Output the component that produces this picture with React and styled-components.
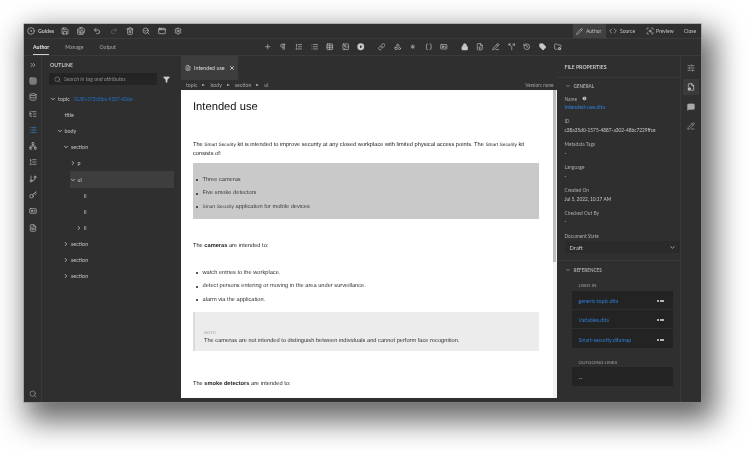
import React from "react";
import styled, { createGlobalStyle } from "styled-components";
import {
  AppWindow, Asterisk, Braces, ChevronDown, ChevronRight, ChevronsRight, CircleDot, Code, Database,
  FileCog, FileDown, FileText, FolderCog, Funnel, GitBranch, Grid3x3, History, IdCard, Image, Info,
  Key, Link, List, ListOrdered, ListTree, Lock, MessageSquare, Network, Pencil, PencilLine, Pilcrow, Plus,
  Redo2, Save, SaveAll, ScanSearch, Search, SearchCheck, Settings, Shapes, SlidersHorizontal, Split, Table,
  Tag, Trash2, Undo2, X,
} from "lucide-react";

const GlobalStyle = createGlobalStyle`
  html, body {
    margin: 0;
    padding: 0;
    background: #fff;
    overflow: hidden;
  }
`;

const Page = styled.div`
  width: 750px;
  height: 450px;
  padding: 24px 0 0 24px;
  box-sizing: border-box;
  overflow: hidden;
  font-family: Lato, "Open Sans", sans-serif;
`;

const Window = styled.div`
  width: 677px;
  height: 378px;
  display: flex;
  flex-direction: column;
  background: #2f2f2f;
  color: #c4c4c4;
  font-size: 5.4px;
  filter: blur(0.25px);
  box-shadow: 0 0 0 0.5px #888, 8px 13px 28px 6px rgba(0, 0, 0, 0.6);
`;

const TopBar = styled.div`
  height: 14px;
  flex: none;
  display: flex;
  align-items: center;
  justify-content: space-between;
  padding-left: 2px;
  border-bottom: 1px solid #3a3a3a;
`;

const IconGroup = styled.div`
  display: flex;
  align-items: center;
`;

const IconCell = styled.span`
  width: ${(p) => p.$w || 16.2}px;
  height: 12px;
  flex: none;
  display: flex;
  align-items: center;
  justify-content: center;
  color: ${(p) => (p.$dim ? "#6a6a6a" : "#c8c8c8")};
`;

const GuidesLabel = styled.span`
  width: 19px;
  margin-left: 2px;
  font-size: 5.2px;
  font-weight: 700;
`;

const ModeTabs = styled.div`
  display: flex;
  align-items: stretch;
  height: 100%;
  font-size: 5px;
`;

const ModeTab = styled.div`
  width: ${(p) => p.$w}px;
  box-sizing: border-box;
  display: flex;
  align-items: center;
  gap: ${(p) => p.$gap || 3}px;
  padding-left: 3px;
  background: ${(p) => (p.$active ? "#414141" : "transparent")};
`;

const Toolbar = styled.div`
  height: 16px;
  flex: none;
  display: flex;
  align-items: center;
  justify-content: space-between;
  padding: 0 135px 0 9px;
  border-bottom: 1px solid #3a3a3a;
`;

const SubTabs = styled.div`
  display: flex;
  gap: 16px;
  height: 100%;
  font-size: 5.2px;
`;

const SubTab = styled.div`
  display: flex;
  align-items: center;
  height: 100%;
  box-sizing: border-box;
  color: ${(p) => (p.$active ? "#e4e4e4" : "#a8a8a8")};
  font-weight: ${(p) => (p.$active ? 700 : 400)};
  border-bottom: 1px solid ${(p) => (p.$active ? "#d0d0d0" : "transparent")};
`;

const Main = styled.div`
  flex: 1;
  min-height: 0;
  display: grid;
  grid-template-columns: 18px 138.5px 376px 124.5px 20px;
`;

const Rail = styled.div`
  display: flex;
  flex-direction: column;
  align-items: center;
  border-right: 1px solid #393939;
  padding-top: 0.5px;
`;

const RailButton = styled.div`
  width: 18px;
  height: 16.3px;
  flex: none;
  display: flex;
  align-items: center;
  justify-content: center;
  color: ${(p) => (p.$active ? "#3d8ce0" : "#bdbdbd")};
`;

const RailFoot = styled.div`
  margin-top: auto;
  height: 16px;
  display: flex;
  align-items: center;
  color: #9a9a9a;
`;

const Outline = styled.div`
  display: flex;
  flex-direction: column;
`;

const PanelTitle = styled.div`
  height: 17px;
  flex: none;
  display: flex;
  align-items: center;
  padding-left: 8px;
  font-size: 5.2px;
  font-weight: 700;
  letter-spacing: 0.1px;
  color: #c8c8c8;
`;

const SearchRow = styled.div`
  display: flex;
  align-items: center;
  gap: 6px;
  margin: 0 0 6px 7px;
`;

const SearchBox = styled.div`
  width: 108px;
  height: 12px;
  display: flex;
  align-items: center;
  gap: 3px;
  padding-left: 5px;
  box-sizing: border-box;
  background: #242424;
  border-radius: 1px;
  font-size: 5.4px;
  font-style: italic;
  color: #8c8c8c;
`;

const FilterIcon = styled.span`
  display: flex;
  color: #cfcfcf;
`;

const TreeRow = styled.div`
  height: 16.1px;
  flex: none;
  display: flex;
  align-items: center;
  gap: 2px;
  margin-left: ${(p) => 8 + p.$depth * 6.5}px;
  margin-right: 7px;
  background: ${(p) => (p.$selected ? "#3e3e3e" : "transparent")};
  font-size: 5.4px;
`;

const Twist = styled.span`
  width: 6px;
  flex: none;
  display: flex;
  justify-content: center;
  color: #d8d8d8;
`;

const GuidLink = styled.span`
  margin-left: 2px;
  font-size: 4.7px;
  color: #2272c8;
  white-space: nowrap;
`;

const Editor = styled.div`
  display: flex;
  flex-direction: column;
  min-height: 0;
  margin-left: 0.5px;
`;

const FileTabs = styled.div`
  height: 24px;
  flex: none;
  display: flex;
`;

const FileTab = styled.div`
  width: 57px;
  display: flex;
  align-items: center;
  padding-left: 4px;
  box-sizing: border-box;
  gap: 3px;
  background: #3d3d3d;
  font-size: 5.4px;
  white-space: nowrap;
  color: #dcdcdc;
`;

const FileTabClose = styled.span`
  margin-left: auto;
  margin-right: 3px;
  display: flex;
  color: #e8e8e8;
`;

const Breadcrumbs = styled.div`
  height: 10px;
  flex: none;
  display: flex;
  align-items: center;
  gap: 5px;
  padding: 0 3px 0 5px;
  font-size: 5.2px;
  color: #a4a4a4;
`;

const Caret = styled.span`
  width: 0;
  height: 0;
  border-left: 3px solid #c0c0c0;
  border-top: 1.5px solid transparent;
  border-bottom: 1.5px solid transparent;
`;

const Version = styled.span`
  margin-left: auto;
  font-size: 4.7px;
`;

const DocFrame = styled.div`
  flex: 1;
  min-height: 0;
  display: flex;
  margin-bottom: 4px;
  background: #fff;
  overflow: hidden;
`;

const Doc = styled.div`
  flex: 1;
  min-width: 0;
  padding: 0 14px 0 12px;
  color: #222;
  font-family: "Liberation Sans", Arial, sans-serif;
  font-size: 5.68px;
  line-height: 9px;
  text-rendering: geometricPrecision;
`;

const Heading = styled.h1`
  margin: 10px 0 25.5px;
  height: 15px;
  font-size: 11.2px;
  line-height: 15px;
  font-weight: 400;
  color: #111;
`;

const Para = styled.p`
  margin: ${(p) => p.$top || 0}px 0 0;
`;

const Brand = styled.span`
  font-size: 4.8px;
`;

const Bullets = styled.ul`
  list-style: none;
  margin: ${(p) => p.$top || 0}px 0 0;
  padding: ${(p) => (p.$shaded ? "10.25px 3px 5.25px" : "0 3px")};
  background: ${(p) => (p.$shaded ? "#c9c9c9" : "transparent")};
  color: ${(p) => (p.$shaded ? "#3c3c3c" : "#333")};
`;

const Bullet = styled.li`
  height: 13.5px;
  display: flex;
  align-items: center;
  gap: 4.5px;
  white-space: pre;

  &::before {
    content: "";
    width: 2px;
    height: 2px;
    flex: none;
    border-radius: 50%;
    background: #222;
  }
`;

const Note = styled.div`
  margin-top: 5.25px;
  height: 39px;
  box-sizing: border-box;
  padding: 17.5px 0 0 9px;
  background: #ececec;
  border-left: 2px solid #dadada;
  color: #333;
`;

const NoteLabel = styled.div`
  font-size: 4px;
  line-height: 5px;
  margin-bottom: 2px;
  letter-spacing: 0.3px;
  color: #999;
`;

const Scrollbar = styled.div`
  width: 4px;
  flex: none;
  background: #f2f2f2;
`;

const ScrollThumb = styled.div`
  width: 3px;
  margin-left: 0.5px;
  height: 172px;
  background: #bdbdbd;
`;

const Properties = styled.div`
  display: flex;
  flex-direction: column;
  border-right: 1px solid #393939;
`;

const PropHeader = styled.div`
  height: 21px;
  flex: none;
  display: flex;
  align-items: center;
  padding-left: 8px;
  font-size: 5.2px;
  font-weight: 700;
  color: #c8c8c8;
  border-bottom: 1px solid #393939;
`;

const SectionHead = styled.div`
  height: ${(p) => p.$h}px;
  flex: none;
  display: flex;
  align-items: center;
  gap: 3px;
  padding-left: 8px;
  font-size: 4.6px;
  font-weight: 700;
  color: #a8a8a8;
`;

const Fields = styled.div`
  padding: 0 0 0 8px;
`;

const Field = styled.div`
  height: 22.9px;
`;

const FieldLabel = styled.div`
  display: flex;
  align-items: center;
  gap: 5px;
  height: 9px;
  font-size: 4.8px;
  color: #acacac;
`;

const FieldValue = styled.div`
  height: 9px;
  line-height: 9px;
  font-size: ${(p) => (p.$link ? 5.3 : 4.8)}px;
  white-space: nowrap;
  color: ${(p) => (p.$link ? "#2f7fd6" : "#c8c8c8")};
`;

const StateSelect = styled.div`
  height: 12px;
  margin: 1px 0 7px;
  display: flex;
  align-items: center;
  justify-content: space-between;
  padding: 0 4px 0 5px;
  background: #2a2a2a;
  font-size: 5.8px;
  color: #c8c8c8;
`;

const SectionRule = styled.div`
  height: 1px;
  flex: none;
  background: #393939;
`;

const SubHead = styled.div`
  height: ${(p) => p.$h}px;
  box-sizing: border-box;
  padding: ${(p) => p.$top || 0}px 0 0 22px;
  display: flex;
  align-items: center;
  font-size: 4.6px;
  color: #a0a0a0;
`;

const RefList = styled.div`
  margin: 0 7px 0 15px;
  background: #232323;
`;

const RefRow = styled.div`
  height: 19px;
  box-sizing: border-box;
  display: flex;
  align-items: center;
  justify-content: space-between;
  padding: 2px 9px 0 7px;
  font-size: 5.2px;
  color: #2f7fd6;
  border-bottom: ${(p) => (p.$last ? "none" : "1px solid #2e2e2e")};
`;

const Dots = styled.span`
  display: flex;
  gap: 0.5px;

  i {
    width: 2px;
    height: 2px;
    background: #e4e4e4;
    border-radius: 50%;
  }
`;

const EmptyRow = styled.div`
  height: 19px;
  display: flex;
  align-items: center;
  margin: 0 7px 0 15px;
  padding: 3px 0 0 7px;
  box-sizing: border-box;
  background: #232323;
  font-size: 5.4px;
`;

const SideRail = styled.div`
  display: flex;
  flex-direction: column;
  align-items: center;
  padding-top: 4px;
`;

const SideButton = styled.div`
  width: 16px;
  height: 16px;
  margin-bottom: 3.4px;
  display: flex;
  align-items: center;
  justify-content: center;
  background: ${(p) => (p.$active ? "#3a3a3a" : "transparent")};
  color: ${(p) => (p.$active ? "#dcdcdc" : "#a8a8a8")};
`;

const PlayDisc = ({ size }) => (
  <svg width={size} height={size} viewBox="0 0 24 24">
    <circle cx="12" cy="12" r="11" fill="currentColor" />
    <path d="M9.5 7l8 5-8 5z" fill="#2f2f2f" />
  </svg>
);

const FilledLock = ({ size }) => <Lock size={size} fill="currentColor" />;
const FilledTag = ({ size }) => <Tag size={size} fill="currentColor" />;

const fileIcons = [Save, SaveAll, Undo2, Redo2, Trash2, SearchCheck, AppWindow, Settings];
const toolIcons = [
  Plus, Pilcrow, ListOrdered, List, Table, Image, PlayDisc, null, Link, Shapes, Asterisk, Braces, IdCard,
  null, FilledLock, FileDown, PencilLine, Split, History, FilledTag, FolderCog,
];
const railIcons = [ChevronsRight, Grid3x3, Database, ListTree, List, Network, ListOrdered, GitBranch, Key, IdCard, FileText];

const tree = [
  { depth: 0, label: "topic", open: true, guid: "GUID-373cf0bc-9337-436e-" },
  { depth: 1, label: "title" },
  { depth: 1, label: "body", open: true },
  { depth: 2, label: "section", open: true },
  { depth: 3, label: "p", open: false },
  { depth: 3, label: "ul", open: true, selected: true },
  { depth: 4, label: "li" },
  { depth: 4, label: "li" },
  { depth: 4, label: "li", open: false },
  { depth: 2, label: "section", open: false },
  { depth: 2, label: "section", open: false },
  { depth: 2, label: "section", open: false },
];

const fields = [
  { label: "ID", value: "c38a35d0-1575-4887-a302-48bc7229ffce" },
  { label: "Metadata Tags", value: "-" },
  { label: "Language", value: "-" },
  { label: "Created On", value: "Jul 5, 2022, 10:17 AM" },
  { label: "Checked Out By", value: "-" },
];

const SmartSecurity = () => <Brand>Smart Security</Brand>;

const App = () => (
  <Page>
    <GlobalStyle />
    <Window>
      <TopBar>
        <IconGroup>
          <IconCell $w={10}>
            <CircleDot size={8} />
          </IconCell>
          <GuidesLabel>Guides</GuidesLabel>
          {fileIcons.map((Icon, i) => (
            <IconCell key={i} $dim={i === 3}>
              <Icon size={8} />
            </IconCell>
          ))}
        </IconGroup>
        <ModeTabs>
          <ModeTab $active $w={33}>
            <Pencil size={7} />
            Author
          </ModeTab>
          <ModeTab $w={37}>
            <Code size={8} />
            Source
          </ModeTab>
          <ModeTab $w={38} $gap={2}>
            <ScanSearch size={8} />
            Preview
          </ModeTab>
          <ModeTab $w={20}>Close</ModeTab>
        </ModeTabs>
      </TopBar>

      <Toolbar>
        <SubTabs>
          <SubTab $active>Author</SubTab>
          <SubTab>Manage</SubTab>
          <SubTab>Output</SubTab>
        </SubTabs>
        <IconGroup>
          {toolIcons.map((Icon, i) =>
            Icon ? (
              <IconCell key={i} $w={15.6}>
                <Icon size={7.5} />
              </IconCell>
            ) : (
              <IconCell key={i} $w={5} />
            )
          )}
        </IconGroup>
      </Toolbar>

      <Main>
        <Rail>
          {railIcons.map((Icon, i) => (
            <RailButton key={i} $active={i === 4}>
              <Icon size={8} />
            </RailButton>
          ))}
          <RailFoot>
            <Search size={8} />
          </RailFoot>
        </Rail>

        <Outline>
          <PanelTitle>OUTLINE</PanelTitle>
          <SearchRow>
            <SearchBox>
              <Search size={7} />
              Search in tag and attributes
            </SearchBox>
            <FilterIcon>
              <Funnel size={7} fill="currentColor" />
            </FilterIcon>
          </SearchRow>
          {tree.map((node, i) => (
            <TreeRow key={i} $depth={node.depth} $selected={node.selected}>
              <Twist>
                {node.open === true && <ChevronDown size={6} strokeWidth={3} />}
                {node.open === false && <ChevronRight size={6} strokeWidth={3} />}
              </Twist>
              {node.label}
              {node.guid && <GuidLink>{node.guid}</GuidLink>}
            </TreeRow>
          ))}
        </Outline>

        <Editor>
          <FileTabs>
            <FileTab>
              <FileText size={6} />
              Intended use
              <FileTabClose>
                <X size={6} strokeWidth={3} />
              </FileTabClose>
            </FileTab>
          </FileTabs>
          <Breadcrumbs>
            topic <Caret /> body <Caret /> section <Caret /> ul
            <Version>Version: none</Version>
          </Breadcrumbs>
          <DocFrame>
            <Doc>
              <Heading>Intended use</Heading>
              <Para>
                The <SmartSecurity /> kit is intended to improve security at any closed workplace with limited physical
                access points. The <SmartSecurity /> kit consists of:
              </Para>
              <Bullets $shaded $top={4.5}>
                <Bullet>Three cameras</Bullet>
                <Bullet>Five smoke detectors</Bullet>
                <Bullet>
                  <span>
                    <SmartSecurity /> application for mobile devices
                  </span>
                </Bullet>
              </Bullets>
              <Para $top={22.5}>
                The <b>cameras</b> are intended to:
              </Para>
              <Bullets $top={15.75}>
                <Bullet>watch entries to the workplace.</Bullet>
                <Bullet>detect persons entering or moving in the area under surveillance.</Bullet>
                <Bullet>alarm via the application.</Bullet>
              </Bullets>
              <Note>
                <NoteLabel>NOTE</NoteLabel>
                The cameras are not intended to distinguish between individuals and cannot perform face recognition.
              </Note>
              <Para $top={28.5}>
                The <b>smoke detectors</b> are intended to:
              </Para>
            </Doc>
            <Scrollbar>
              <ScrollThumb />
            </Scrollbar>
          </DocFrame>
        </Editor>

        <Properties>
          <PropHeader>FILE PROPERTIES</PropHeader>
          <SectionHead $h={16}>
            <ChevronDown size={6} strokeWidth={2.5} />
            GENERAL
          </SectionHead>
          <Fields>
            <Field>
              <FieldLabel>
                Name
                <Info size={5} fill="#d0d0d0" color="#2f2f2f" />
              </FieldLabel>
              <FieldValue $link>intended-use.dita</FieldValue>
            </Field>
            {fields.map((f) => (
              <Field key={f.label}>
                <FieldLabel>{f.label}</FieldLabel>
                <FieldValue>{f.value}</FieldValue>
              </Field>
            ))}
            <FieldLabel>Document State</FieldLabel>
            <StateSelect>
              Draft
              <ChevronDown size={7} strokeWidth={2.5} />
            </StateSelect>
          </Fields>
          <SectionRule />
          <SectionHead $h={17}>
            <ChevronDown size={6} strokeWidth={2.5} />
            REFERENCES
          </SectionHead>
          <SubHead $h={13}>USED IN</SubHead>
          <RefList>
            {["generic-topic.dita", "Variables.dita", "Smart-security.ditamap"].map((name, i) => (
              <RefRow key={name} $last={i === 2}>
                {name}
                <Dots>
                  <i />
                  <i />
                  <i />
                </Dots>
              </RefRow>
            ))}
          </RefList>
          <SubHead $h={19} $top={9}>OUTGOING LINKS</SubHead>
          <EmptyRow>--</EmptyRow>
        </Properties>

        <SideRail>
          <SideButton>
            <SlidersHorizontal size={8} />
          </SideButton>
          <SideButton $active>
            <FileCog size={8} />
          </SideButton>
          <SideButton>
            <MessageSquare size={8} fill="currentColor" />
          </SideButton>
          <SideButton>
            <PencilLine size={8} />
          </SideButton>
        </SideRail>
      </Main>
    </Window>
  </Page>
);

export default App;
